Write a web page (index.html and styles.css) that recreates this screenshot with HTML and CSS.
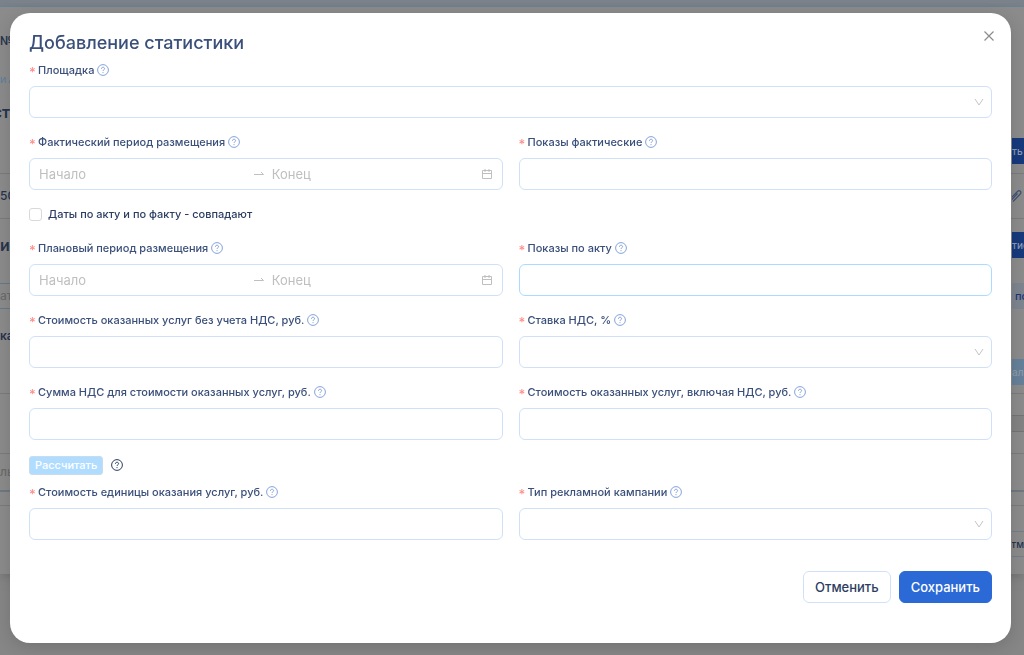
FILE: index.html
```
<!DOCTYPE html>
<html lang="ru">
<head>
	<meta charset="UTF-8">
	<title>Добавление статистики</title>
	<link rel="stylesheet" href="styles.css">
</head>
<body>
<svg class="sprite" aria-hidden="true">
	<symbol id="i-help" viewBox="0 0 12 12">
		<circle cx="6" cy="6" r="5.4" fill="none" stroke="currentColor"/>
		<path d="M4.4 4.8c0-2.1 3.2-2.1 3.2-.1 0 1.1-1.6 1.1-1.6 2.3" fill="none" stroke="currentColor"/>
		<circle cx="6" cy="8.6" r=".6" fill="currentColor"/>
	</symbol>
	<symbol id="i-down" viewBox="0 0 10 10">
		<path d="M1 2l4 6 4-6" fill="none" stroke="currentColor"/>
	</symbol>
	<symbol id="i-arrow" viewBox="0 0 12 12">
		<path d="M1 6.5h9.5L8 4" fill="none" stroke="currentColor"/>
	</symbol>
	<symbol id="i-date" viewBox="0 0 12 12">
		<path d="M1.500 2.500h9v8h-9zM1.500 5.500h9M4 1v3M8 1v3" fill="none" stroke="currentColor"/>
	</symbol>
</svg>

<div class="page" aria-hidden="true">
	<div class="page-head"></div>
	<div class="page-card">
		<div class="line line-num"><b>№1</b></div>
		<div class="line line-crumbs"><span>И А</span></div>
		<div class="line line-title"><b class="tail">ст</b></div>
		<div class="line line-action bordered"><span></span><span class="chip blue">ть п</span></div>
		<div class="line line-edit bordered"><span>500</span>
			<svg class="pen" viewBox="0 0 12 14"><path d="M-2 10L5.500 2.500c2-2 4.500.5 2.700 2.500L1 12.500M-1 11.500L5.500 4.500" fill="none" stroke="currentColor" stroke-width="1.200"/></svg>
		</div>
		<div class="line line-section"><b>ис</b><span class="chip blue">тис</span></div>
		<div class="line line-filter"><span class="search">ать</span><span class="chip cell">по</span></div>
		<div class="line line-name"><b>ка</b></div>
		<div class="line line-add bordered"><span></span><span class="chip light">ал</span></div>
		<div class="line line-table bordered"><span></span><span class="bar"></span></div>
		<div class="line line-result"><span>льт</span></div>
		<div class="line line-gap bordered"></div>
		<div class="line line-foot"><span></span><span class="chip plain tail">Отм</span></div>
	</div>
</div>

<div class="overlay">
	<form class="modal" role="dialog" aria-labelledby="modal-title">
		<div class="modal-head">
			<h1 id="modal-title">Добавление статистики</h1>
			<button type="button" class="close" aria-label="Закрыть">
				<svg viewBox="0 0 12 12"><path d="M1.500 1.500l9 9M10.500 1.500l-9 9" fill="none" stroke="currentColor" stroke-width="1.200"/></svg>
			</button>
		</div>

		<div class="field">
			<label for="place">Площадка <svg class="help"><use href="#i-help"/></svg></label>
			<div class="select"><select id="place"><option></option></select><svg><use href="#i-down"/></svg></div>
		</div>

		<div class="row">
			<div class="field">
				<label for="fact-start">Фактический период размещения <svg class="help"><use href="#i-help"/></svg></label>
				<div class="range">
					<input id="fact-start" type="text" placeholder="Начало">
					<svg class="sep"><use href="#i-arrow"/></svg>
					<input type="text" placeholder="Конец" aria-label="Конец фактического периода">
					<svg class="date"><use href="#i-date"/></svg>
				</div>
			</div>
			<div class="field">
				<label for="fact-shows">Показы фактические <svg class="help"><use href="#i-help"/></svg></label>
				<input id="fact-shows" class="control" type="text">
			</div>
		</div>

		<div class="check">
			<input id="same" type="checkbox">
			<label for="same">Даты по акту и по факту - совпадают</label>
		</div>

		<div class="row">
			<div class="field">
				<label for="plan-start">Плановый период размещения <svg class="help"><use href="#i-help"/></svg></label>
				<div class="range">
					<input id="plan-start" type="text" placeholder="Начало">
					<svg class="sep"><use href="#i-arrow"/></svg>
					<input type="text" placeholder="Конец" aria-label="Конец планового периода">
					<svg class="date"><use href="#i-date"/></svg>
				</div>
			</div>
			<div class="field">
				<label for="act-shows">Показы по акту <svg class="help"><use href="#i-help"/></svg></label>
				<input id="act-shows" class="control active" type="text">
			</div>
		</div>

		<div class="row">
			<div class="field">
				<label for="cost">Стоимость оказанных услуг без учета НДС, руб. <svg class="help"><use href="#i-help"/></svg></label>
				<input id="cost" class="control" type="text">
			</div>
			<div class="field">
				<label for="rate">Ставка НДС, % <svg class="help"><use href="#i-help"/></svg></label>
				<div class="select"><select id="rate"><option></option></select><svg><use href="#i-down"/></svg></div>
			</div>
		</div>

		<div class="row">
			<div class="field">
				<label for="vat">Сумма НДС для стоимости оказанных услуг, руб. <svg class="help"><use href="#i-help"/></svg></label>
				<input id="vat" class="control" type="text">
			</div>
			<div class="field">
				<label for="total">Стоимость оказанных услуг, включая НДС, руб. <svg class="help"><use href="#i-help"/></svg></label>
				<input id="total" class="control" type="text">
			</div>
		</div>

		<div class="calc">
			<button type="button" disabled>Рассчитать</button>
			<svg class="help"><use href="#i-help"/></svg>
		</div>

		<div class="row">
			<div class="field">
				<label for="unit">Стоимость единицы оказания услуг, руб. <svg class="help"><use href="#i-help"/></svg></label>
				<input id="unit" class="control" type="text">
			</div>
			<div class="field">
				<label for="campaign">Тип рекламной кампании <svg class="help"><use href="#i-help"/></svg></label>
				<div class="select"><select id="campaign"><option></option></select><svg><use href="#i-down"/></svg></div>
			</div>
		</div>

		<div class="buttons">
			<button type="button" class="btn">Отменить</button>
			<button type="submit" class="btn primary">Сохранить</button>
		</div>
	</form>
</div>
</body>
</html>
```
FILE: styles.css
```
*{
	margin: 0;
	padding: 0;
	box-sizing: border-box;
}
body{
	min-height: 100vh;
	background: #868686;
	color: #3a4f7a;
	font: 500 11px/20px Inter, "Noto Sans", sans-serif;
	overflow: hidden;
}
button, input, select{font: inherit; color: inherit;}
.sprite{display: none;}

/* page under the mask */
.page{color: #27334d; font-size: 12px;}
.page-head{height: 7px; background: #7b848d; border-bottom: 1px solid #66899f;}
.page-card{background: #8b8b8b; box-shadow: 0 2px 10px #707070;}
.line{
	display: grid;
	grid-template-columns: 10px 12px;
	justify-content: space-between;
	align-items: center;
	overflow: hidden;
	white-space: nowrap;
}
.line > *{overflow: hidden;}
.line b{font-size: 16px; font-weight: 600;}
.line .tail{display: flex; justify-content: flex-end;}
.line.bordered{border-bottom: 1px solid #7b7b7b;}
.line-num{height: 68px;}
.line-num b, .line-name b{font-size: 12px;}
.line-crumbs{height: 10px; color: #5e7f9c; line-height: 10px; font-size: 8px;}
.line-title{height: 53px;}
.line-action{height: 36px; align-items: start;}
.line-edit{height: 45px;}
.line-section{height: 52px;}
.line-filter{height: 50px;}
.line-name{height: 29px;}
.line-add{height: 44px;}
.line-table{height: 60px;}
.line-result{height: 38px; color: #6c6c6c; border-bottom: 2px solid #6f7782;}
.line-gap{height: 14px;}
.line-foot{height: 68px; padding-top: 8px;}
.chip{height: 26px; line-height: 26px; font-size: 10px;}
.blue{background: #173a7c; color: #8f9bb0;}
.cell{background: #7d858e; color: #1c3675; padding-left: 3px; font-size: 11px;}
.light{background: #658199; color: #8d9aa5;}
.plain{border-top: 1px solid #737d8c; border-bottom: 1px solid #737d8c; line-height: 24px;}
.search{height: 26px; line-height: 24px; border-top: 1px solid #667888; border-bottom: 1px solid #667888; color: #6c6c6c;}
.bar{height: 17px; background: #838383; border-top: 1px solid #747474; border-bottom: 1px solid #747474;}
.pen{width: 12px; height: 14px; color: #3f5175;}

/* modal */
.overlay{
	position: fixed;
	inset: 0;
	display: flex;
	align-items: flex-start;
	padding: 13px 13px 12px 10px;
}
.modal{
	flex: 1;
	padding: 17px 19px 40px;
	background: #fff;
	border-radius: 20px;
	box-shadow: 0 4px 16px rgba(0, 0, 0, .15);
}
.modal-head{
	display: flex;
	justify-content: space-between;
	margin-bottom: 5px;
}
h1{font-size: 18px; font-weight: 500; line-height: 25px;}
.close{
	width: 12px;
	height: 12px;
	margin-right: -3px;
	border: 0;
	background: none;
	color: #8c8c8c;
}
.close svg{display: block; width: 12px; height: 12px;}
.row{display: grid; grid-template-columns: 1fr 1fr; gap: 16px;}
.field{margin-bottom: 14px; min-width: 0;}
.field label{display: flex; align-items: center; margin-bottom: 6px;}
.field label:before{
	content: "*";
	width: 9px;
	height: 16px;
	color: #ff8f8c;
	font-size: 13px;
}
.help{width: 12px; height: 12px; margin-left: 3px; color: #86a3da;}
.control, .range, .select select{
	display: block;
	width: 100%;
	height: 32px;
	padding: 0 9px;
	border: 1px solid #cfe1f9;
	border-radius: 6px;
	background: #fff;
	font-size: 13px;
	outline: 0;
}
.control.active{border-color: #a9dcff;}
.select{display: grid; align-items: center;}
.select select{grid-area: 1 / 1; appearance: none;}
.select svg{
	grid-area: 1 / 1;
	justify-self: end;
	width: 10px;
	height: 10px;
	margin-right: 8px;
	color: #c4c4c4;
	pointer-events: none;
}
.range{display: flex; align-items: center;}
.range input{flex: 1; min-width: 0; border: 0; outline: 0; background: none;}
.range input::placeholder{color: #bfbfbf; font-weight: 400;}
.sep{width: 12px; height: 12px; margin: 0 7px 0 5px; color: #bfbfbf;}
.date{width: 12px; height: 12px; color: #bfbfbf;}
.check{display: flex; align-items: center; gap: 6px; margin-bottom: 14px; color: #2c3d62;}
.check input{
	appearance: none;
	width: 13px;
	height: 13px;
	border: 1px solid #d9d9d9;
	border-radius: 3px;
	background: #fff;
}
.calc{display: flex; align-items: center; height: 22px; margin-bottom: 6px;}
.calc button{
	height: 19px;
	padding: 0 5px;
	border: 1px solid #c9dcec;
	border-radius: 3px;
	background: #b0dcff;
	color: #fff;
	line-height: 17px;
}
.calc .help{margin-left: 8px; color: #2c3d62;}
.buttons{display: flex; justify-content: flex-end; gap: 8px; margin-top: 31px;}
.row + .buttons{margin-top: 17px;}
.btn{
	height: 32px;
	padding: 0 11px;
	border: 1px solid #cfe1f9;
	border-radius: 6px;
	background: #fff;
	color: #2c3d62;
	font-size: 13px;
}
.btn.primary{border-color: #2a69d6; background: #2a69d6; color: #fff;}
```
